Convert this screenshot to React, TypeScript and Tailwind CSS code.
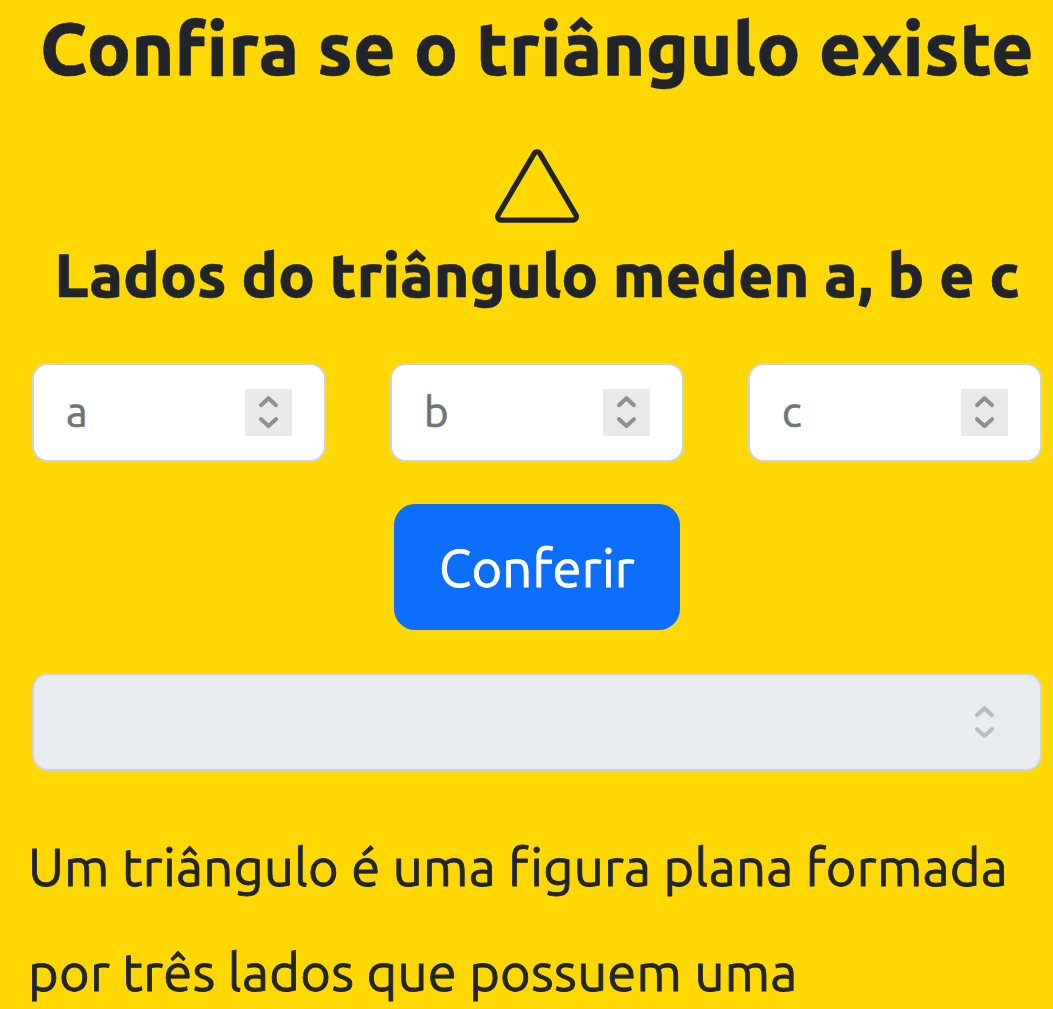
import { BsTriangle } from 'react-icons/bs';

function Stepper({ muted = false }: { muted?: boolean }) {
  return (
    <span
      className={
        muted
          ? 'block h-[47px] w-[47px] shrink-0 text-[#b9bcc0]'
          : 'block h-[47px] w-[47px] shrink-0 bg-[#ebe8ec] text-[#8f8e93]'
      }
    >
      <svg width="47" height="47" viewBox="0 0 47 47" fill="none" stroke="currentColor" strokeWidth="4" strokeLinecap="round" strokeLinejoin="round">
        <path d="M16 16.2L23.5 9.2L31 16.2M16 30.2L23.5 37L31 30.2" />
      </svg>
    </span>
  );
}

function Field({ label }: { label: string }) {
  return (
    <div className="flex h-[99px] w-[294px] items-center justify-between rounded-[16px] border-2 border-[#ced4da] bg-white px-[32px] text-[#6f7478]">
      <span className="-mt-[2px] text-[42px] leading-[63px] font-normal [-webkit-text-stroke:0.7px]">{label}</span>
      <Stepper />
    </div>
  );
}

export default function App() {
  return (
    <main className="h-[1009px] w-[1053px] overflow-hidden bg-[#ffd703] font-['Ubuntu','Noto_Sans',sans-serif] text-[#212529]">
      <div className="flex w-[1074px] flex-col items-center">
        <h1 className="mt-[3px] h-[91px] text-[73px] leading-[90px] font-extrabold tracking-[0.35px] whitespace-nowrap [-webkit-text-stroke:0.5px]">Confira se o triângulo existe</h1>
        <BsTriangle className="mt-[50px] h-[84px] w-[84px]" />
        <h2 className="mt-[9px] h-[77px] text-[61px] leading-[76px] font-extrabold whitespace-nowrap [-webkit-text-stroke:0.5px]">Lados do triângulo meden a, b e c</h2>
        <div className="mt-[49px] flex gap-[64px]">
          <Field label="a" />
          <Field label="b" />
          <Field label="c" />
        </div>
        <button className="mt-[42px] h-[126px] w-[286px] rounded-[21px] bg-[#0d6efd] text-[52.5px] leading-[79px] tracking-[0.2px] text-white [-webkit-text-stroke:0.8px]">Conferir</button>
        <div className="mt-[43px] flex h-[98px] w-[1010px] items-center justify-end rounded-[16px] border-2 border-[#ced4da] bg-[#e9ecef] px-[32px]">
          <Stepper muted />
        </div>
      </div>
      <p className="mt-[43px] ml-[28px] text-[52.5px] leading-[105px] tracking-[0.25px] whitespace-nowrap [-webkit-text-stroke:0.8px]">
        Um triângulo é uma figura plana formada
        <br />
        por três lados que possuem uma
      </p>
    </main>
  );
}
